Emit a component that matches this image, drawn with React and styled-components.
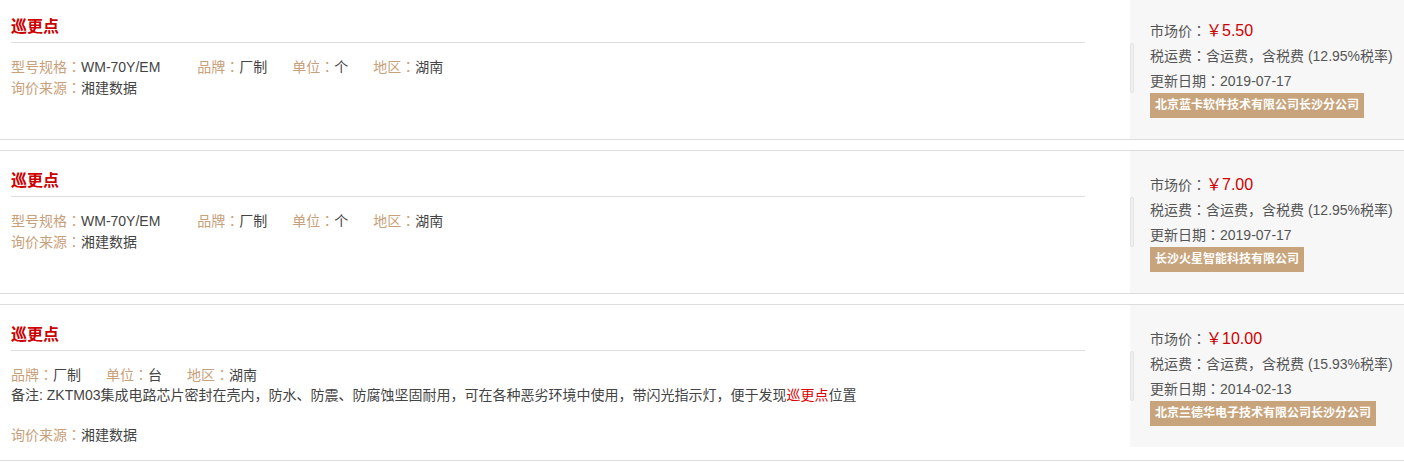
import React from 'react';
import styled, { createGlobalStyle } from 'styled-components';

const GlobalStyle = createGlobalStyle`
  body {
    margin: 0;
    background: #fff;
    font-family: "Liberation Sans", "Noto Sans CJK SC", sans-serif;
    font-size: 14px;
    color: #444;
  }
`;

const List = styled.div`
  margin-top: -4px;
`;

const Row = styled.div`
  display: flex;
  align-items: flex-start;
  border-top: 1px solid #ddd;
  border-bottom: 1px solid #ddd;
  margin-bottom: 10px;
`;

const Left = styled.div`
  flex: 1;
  padding: 0 45px 15px 11px;
`;

const Title = styled.div`
  padding: 20px 0 5px;
  line-height: 20px;
  font-size: 16px;
  font-weight: bold;
  color: #cc0000;
  border-bottom: 1px solid #ddd;
`;

const Fields = styled.div`
  margin-top: 14px;
  line-height: 19.5px;
`;

const Line = styled.div`
  display: flex;
  margin-bottom: ${(p) => (p.$gap ? '19.5px' : '0')};
`;

const Item = styled.span`
  margin-right: ${(p) => (p.$wide ? '37px' : '25px')};
`;

const Label = styled.span`
  color: #c8a07a;
`;

const Colon = styled.span`
  font-family: "Noto Sans CJK JP", sans-serif;
`;

const Value = styled.span`
  color: #444;
`;

const Hit = styled.span`
  color: #dd0000;
`;

const Panel = styled.div`
  position: relative;
  display: flex;
  flex-direction: column;
  align-items: flex-start;
  width: 254px;
  padding: 21px 0 21px 20px;
  background: #f7f7f7;
  color: #555;

  &::before {
    content: '';
    position: absolute;
    left: 0;
    top: 46px;
    width: 2px;
    height: 48px;
    border: 1px solid #e3e3e3;
    border-radius: 2px;
    background: #f0f0f0;
  }
`;

const Info = styled.div`
  height: 25px;
  line-height: 25px;
  white-space: nowrap;
`;

const Price = styled.span`
  color: #d00000;
  font-size: 16px;
  line-height: 1;
`;

const Badge = styled.div`
  padding: 0 5px;
  height: 25px;
  line-height: 25px;
  font-size: 12px;
  font-weight: bold;
  color: #fff;
  background: #c8a47c;
`;

const items = [
  {
    spec: 'WM-70Y/EM',
    unit: '个',
    price: '5.50',
    tax: '12.95%',
    date: '2019-07-17',
    company: '北京蓝卡软件技术有限公司长沙分公司',
  },
  {
    spec: 'WM-70Y/EM',
    unit: '个',
    price: '7.00',
    tax: '12.95%',
    date: '2019-07-17',
    company: '长沙火星智能科技有限公司',
  },
  {
    unit: '台',
    note: true,
    price: '10.00',
    tax: '15.93%',
    date: '2014-02-13',
    company: '北京兰德华电子技术有限公司长沙分公司',
  },
];

function Field({ label, wide, children }) {
  return (
    <Item $wide={wide}>
      <Label>
        {label}
        <Colon>：</Colon>
      </Label>
      <Value>{children}</Value>
    </Item>
  );
}

export default function App() {
  return (
    <>
      <GlobalStyle />
      <List>
        {items.map((it, i) => (
          <Row key={i}>
            <Left>
              <Title>巡更点</Title>
              <Fields>
                <Line>
                  {it.spec && (
                    <Field label="型号规格" wide>
                      {it.spec}
                    </Field>
                  )}
                  <Field label="品牌">厂制</Field>
                  <Field label="单位">{it.unit}</Field>
                  <Field label="地区">湖南</Field>
                </Line>
                {it.note && (
                  <Line $gap>
                    <Value>
                      备注: ZKTM03集成电路芯片密封在壳内，防水、防震、防腐蚀坚固耐用，可在各种恶劣环境中使用，带闪光指示灯，便于发现<Hit>巡更点</Hit>位置
                    </Value>
                  </Line>
                )}
                <Line>
                  <Field label="询价来源">湘建数据</Field>
                </Line>
              </Fields>
            </Left>
            <Panel>
              <Info>
                市场价<Colon>：</Colon>
                <Price>￥{it.price}</Price>
              </Info>
              <Info>
                税运费<Colon>：</Colon>含运费，含税费 ({it.tax}税率)
              </Info>
              <Info>
                更新日期<Colon>：</Colon>
                {it.date}
              </Info>
              <Badge>{it.company}</Badge>
            </Panel>
          </Row>
        ))}
      </List>
    </>
  );
}
